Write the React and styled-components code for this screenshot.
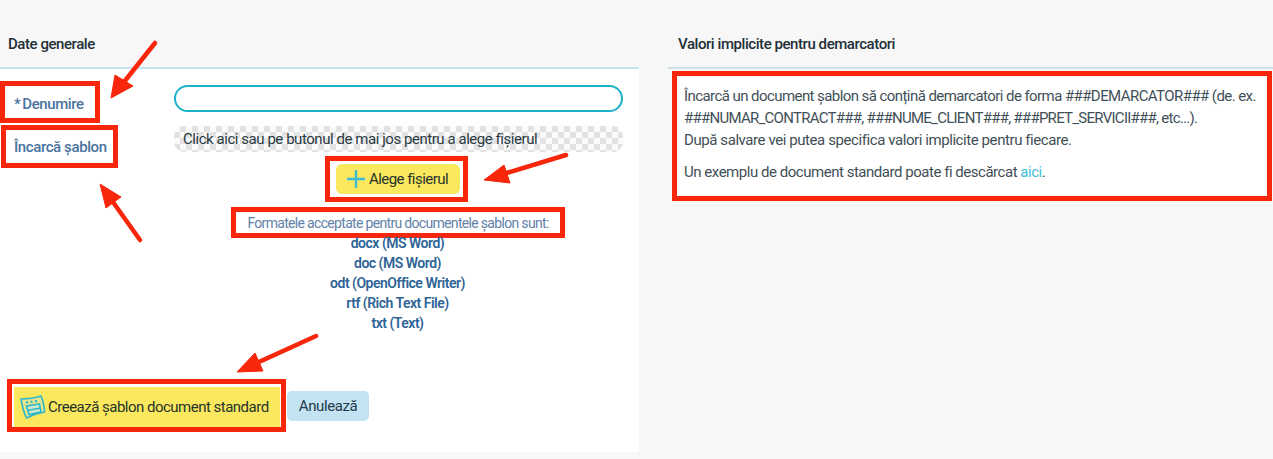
import React from 'react';
import styled, { createGlobalStyle } from 'styled-components';

const GlobalStyle = createGlobalStyle`
    html, body {
        margin: 0;
        padding: 0;
        background: #f7f7f7;
    }
    body {
        font-family: Roboto, "Liberation Sans", sans-serif;
        font-size: 15px;
        color: #22323a;
    }
`

const Page = styled.div`
    position: relative;
    width: 1273px;
    height: 459px;
    display: flex;
    overflow: hidden;
`
const Section = styled.section`
    width: ${props => props.$width}px;
    margin-left: ${props => props.$offset || 0}px;
`
const SectionTitle = styled.h2`
    height: 69px;
    margin: 0;
    padding: 20px 0 0 ${props => props.$inset}px;
    box-sizing: border-box;
    display: flex;
    align-items: center;
    font-size: 15px;
    font-weight: 500;
    letter-spacing: -0.44px;
    color: #1f3038;
    border-bottom: 2px solid ${props => props.$line};
`
const Panel = styled.div`
    background: #fff;
    height: 383px;
`
const Form = styled.div`
    display: grid;
    grid-template-columns: 174px 449px;
`
const Labels = styled.div`
    display: flex;
    flex-direction: column;
    align-items: flex-start;
    padding-top: 12px;
    gap: 2px;
`
const MarkedLabel = styled.label`
    box-sizing: border-box;
    height: ${props => props.$height}px;
    width: ${props => props.$width}px;
    margin-left: ${props => props.$left || 0}px;
    border: 5px solid #f8260a;
    display: flex;
    align-items: center;
    padding: ${props => props.$nudge}px 0 0 ${props => 9 - props.$left}px;
    font-size: 15px;
    font-weight: 500;
    letter-spacing: -0.4px;
    color: #4a73a0;
`
const Star = styled.span`
    margin-right: 2px;
`
const Fields = styled.div`
    display: flex;
    flex-direction: column;
    padding-top: 16px;
`
const TextInput = styled.input`
    box-sizing: border-box;
    height: 27px;
    width: 100%;
    border: 2px solid #1cb0c9;
    border-radius: 14px;
    background: #fff;
    outline: none;
`
const DropZone = styled.div`
    box-sizing: border-box;
    height: 26px;
    margin-top: 14px;
    padding-left: 9px;
    display: flex;
    align-items: center;
    border-radius: 10px;
    background: repeating-conic-gradient(#e2e2e2 0 25%, #fafafa 0 50%) 0 0 / 12px 12px;
    font-size: 15px;
    letter-spacing: -0.45px;
    color: #2b3a42;
`
const ChooseFrame = styled.div`
    box-sizing: border-box;
    width: 143px;
    height: 46px;
    margin: 4px 0 0 151px;
    border: 5px solid #f8260a;
    padding: 3px 3px 3px 6px;
`
const ChooseButton = styled.button`
    width: 100%;
    height: 100%;
    border: 0;
    border-radius: 6px;
    background: #fce85f;
    display: flex;
    align-items: center;
    gap: 3px;
    padding: 0 0 0 10px;
    font: 400 15px Roboto, sans-serif;
    letter-spacing: -0.55px;
    color: #25332a;
`
const FormatsNote = styled.div`
    box-sizing: border-box;
    width: 334px;
    height: 31px;
    margin: 5px 0 0 57px;
    border: 5px solid #f8260a;
    display: flex;
    align-items: center;
    justify-content: center;
    font-size: 14px;
    letter-spacing: -0.68px;
    color: #5f82a8;
`
const FormatList = styled.ul`
    list-style: none;
    margin: -5px 0 0;
    padding: 0 2px 0 0;
    text-align: center;
    line-height: 20px;
    font-size: 14px;
    font-weight: 600;
    letter-spacing: -0.5px;
    color: #2e6496;
`
const Footer = styled.div`
    display: flex;
    align-items: center;
    gap: 1px;
    margin: 46px 0 0 7px;
`
const SubmitFrame = styled.div`
    box-sizing: border-box;
    width: 279px;
    height: 53px;
    border: 5px solid #f8260a;
    padding: 3px 1px 0 2px;
`
const SubmitButton = styled.button`
    width: 100%;
    height: 40px;
    border: 0;
    background: #fce85f;
    display: flex;
    align-items: center;
    gap: 2px;
    padding: 0 0 0 6px;
    font: 400 15px Roboto, sans-serif;
    letter-spacing: -0.51px;
    color: #25332a;
`
const CancelButton = styled.button`
    width: 82px;
    height: 30px;
    border: 0;
    border-radius: 5px;
    background: #c3e2f2;
    font: 400 15px Roboto, sans-serif;
    letter-spacing: -0.4px;
    color: #1f3a4a;
`
const Notice = styled.div`
    box-sizing: border-box;
    width: 600px;
    height: 130px;
    margin: 2px 0 0 4px;
    padding: 9px 0 0 7px;
    border: 5px solid #f8260a;
    background: #fff;
    font-size: 15px;
    line-height: 22px;
    white-space: nowrap;
    color: #3f4f57;
`
const NoticeParagraph = styled.p`
    margin: 0 0 10px;
`
const NoticeLine = styled.span`
    display: block;
    letter-spacing: ${props => props.$tracking}px;
`
const NoticeLink = styled.a`
    color: #45c0d8;
`
const Arrows = styled.svg`
    position: absolute;
    inset: 0;
    pointer-events: none;
`

const formats = [
    'docx (MS Word)',
    'doc (MS Word)',
    'odt (OpenOffice Writer)',
    'rtf (Rich Text File)',
    'txt (Text)',
];

const arrows = [
    { tail: '155,43 120,87', head: '111,98 115,75 133,86' },
    { tail: '566,155 500,175', head: '484,180 504,165 510,183' },
    { tail: '140,240 108,195', head: '100,184 121,197 106,208' },
    { tail: '316,336 250,366', head: '237,372 255,353 263,371' },
];

const PlusIcon = () => (
    <svg width="20" height="20" viewBox="0 0 20 20">
        <path d="M10 1v18M1 10h18" stroke="#3cbcd0" strokeWidth="2.4" fill="none" />
    </svg>
);

const TemplateIcon = () => (
    <svg width="26" height="26" viewBox="0 0 26 26" fill="none" stroke="#2cb8c8" strokeWidth="1.6">
        <path d="M1 5c7 0 14-1 20-3 2 5 3.500 11 3.500 16-6 1-12 3-18 6C3.500 18 2 11 1 5Z" fill="#e7e68f" />
        <path d="M6.500 12 19.500 10l1.500 8-12 2.500Z" fill="#cfe8c8" />
        <path d="M7.500 16.500 20.500 14" />
        <path d="M6 8.500l2-.2M10.500 8l2-.3M15 7.300l2-.4" strokeWidth="2.200" />
    </svg>
);

const App = () => {
    return (
        <Page>
            <GlobalStyle />
            <Section $width={639}>
                <SectionTitle $inset={8} $line="#c5e3ef">Date generale</SectionTitle>
                <Panel>
                    <Form>
                        <Labels>
                            <MarkedLabel $width={100} $height={42} $left={0} $nudge={4}><Star>*</Star>Denumire</MarkedLabel>
                            <MarkedLabel $width={117} $height={43} $left={1} $nudge={0}>Încarcă șablon</MarkedLabel>
                        </Labels>
                        <Fields>
                            <TextInput />
                            <DropZone>Click aici sau pe butonul de mai jos pentru a alege fișierul</DropZone>
                            <ChooseFrame>
                                <ChooseButton><PlusIcon />Alege fișierul</ChooseButton>
                            </ChooseFrame>
                            <FormatsNote>Formatele acceptate pentru documentele șablon sunt:</FormatsNote>
                            <FormatList>
                                {formats.map(format => <li key={format}>{format}</li>)}
                            </FormatList>
                        </Fields>
                    </Form>
                    <Footer>
                        <SubmitFrame>
                            <SubmitButton><TemplateIcon />Creează șablon document standard</SubmitButton>
                        </SubmitFrame>
                        <CancelButton>Anulează</CancelButton>
                    </Footer>
                </Panel>
            </Section>
            <Section $width={605} $offset={29}>
                <SectionTitle $inset={10} $line="#cfdfe6">Valori implicite pentru demarcatori</SectionTitle>
                <Notice>
                    <NoticeParagraph>
                        <NoticeLine $tracking={-0.57}>Încarcă un document șablon să conțină demarcatori de forma ###DEMARCATOR### (de. ex.</NoticeLine>
                        <NoticeLine $tracking={-0.73}>###NUMAR_CONTRACT###, ###NUME_CLIENT###, ###PRET_SERVICII###, etc...).</NoticeLine>
                        <NoticeLine $tracking={-0.42}>După salvare vei putea specifica valori implicite pentru fiecare.</NoticeLine>
                    </NoticeParagraph>
                    <NoticeParagraph>
                        <NoticeLine $tracking={-0.47}>Un exemplu de document standard poate fi descărcat <NoticeLink>aici</NoticeLink>.</NoticeLine>
                    </NoticeParagraph>
                </Notice>
            </Section>
            <Arrows width="1273" height="459" viewBox="0 0 1273 459">
                {arrows.map(arrow => (
                    <g key={arrow.head} fill="#f8260a" stroke="#f8260a">
                        <polyline points={arrow.tail} strokeWidth="4.500" strokeLinecap="round" fill="none" />
                        <polygon points={arrow.head} strokeWidth="1" />
                    </g>
                ))}
            </Arrows>
        </Page>
    )
}

export default App;
